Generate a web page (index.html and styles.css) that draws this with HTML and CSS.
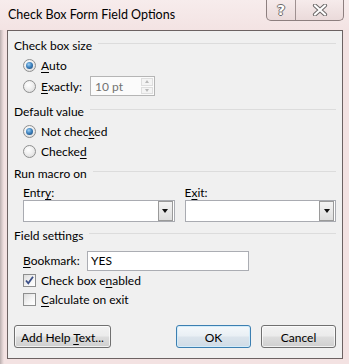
FILE: index.html
```html
<!doctype html>
<html lang="en">
<head>
<meta charset="utf-8">
<title>Check Box Form Field Options</title>
<meta name="viewport" content="width=device-width, initial-scale=1">
<link rel="stylesheet" href="styles.css">
</head>
<body>

<div class="dlg">
  <div class="titlebar">
    <span class="title">Check Box Form Field Options</span>
    <div class="caption">
      <span class="cap-btn help">?</span>
      <span class="cap-btn close">
        <svg width="18" height="12" viewBox="0 0 18 12">
          <path d="M4 1.5 L14 10.5 M14 1.5 L4 10.5" stroke="#6e6a6a" stroke-width="4.2" stroke-linecap="round"/>
          <path d="M4 1.5 L14 10.5 M14 1.5 L4 10.5" stroke="#fff" stroke-width="2.2" stroke-linecap="round"/>
        </svg>
      </span>
    </div>
  </div>

  <div class="client">
    <div class="group"><span>Check box size</span></div>
    <div class="row r-auto"><span class="radio on"></span><span><u>A</u>uto</span></div>
    <div class="row r-exact">
      <span class="radio"></span><span class="lbl-exact"><u>E</u>xactly:</span>
      <div class="spin">
        <span class="spin-val">10 pt</span>
        <span class="spin-btns"><i class="up"></i><i class="down"></i></span>
      </div>
    </div>

    <div class="group g2"><span>Default value</span></div>
    <div class="row r-nc"><span class="radio on"></span><span>Not chec<u>k</u>ed</span></div>
    <div class="row r-c"><span class="radio"></span><span>Checke<u>d</u></span></div>

    <div class="group g3"><span>Run macro on</span></div>
    <div class="macro">
      <div class="macro-col">
        <span class="mlabel">Entr<u>y</u>:</span>
        <div class="combo"><span class="drop"></span></div>
      </div>
      <div class="macro-col">
        <span class="mlabel">E<u>x</u>it:</span>
        <div class="combo"><span class="drop"></span></div>
      </div>
    </div>

    <div class="group g4"><span>Field settings</span></div>
    <div class="row r-bm">
      <span class="lbl-bm"><u>B</u>ookmark:</span>
      <div class="textbox">YES</div>
    </div>
    <div class="row r-cb1">
      <span class="check on">
        <svg width="11" height="11" viewBox="0 0 11 11"><path d="M2 5.5 L4.3 8.3 L9 1.8" fill="none" stroke="#3b4f87" stroke-width="1.8"/></svg>
      </span>
      <span>Check box e<u>n</u>abled</span>
    </div>
    <div class="row r-cb2"><span class="check"></span><span><u>C</u>alculate on exit</span></div>

    <div class="buttons">
      <button class="btn btn-help">Add Help <u>T</u>ext...</button>
      <button class="btn btn-ok">OK</button>
      <button class="btn">Cancel</button>
    </div>
  </div>
</div>

</body>
</html>
```

FILE: styles.css
```css
:root{--frame:#f3e2e2;--face:#f0f0f0;--edge:#8e8f8f;}
html,body{margin:0;padding:0;}
body{background:var(--frame);font-family:Lato,"Noto Sans",sans-serif;font-size:12px;color:#000;}
u{text-decoration:underline;text-underline-offset:2px;}

.dlg{width:349px;height:364px;background:linear-gradient(90deg,#b9aeae 0,#d9cbcb 2px,var(--frame) 4px,var(--frame) 100%);overflow:hidden;}

/* title bar */
.titlebar{height:30px;display:flex;align-items:flex-start;background:linear-gradient(180deg,#f7ecec 0,#f3e3e3 100%);}
.title{padding:6px 0 0 8px;line-height:18px;font-size:12.5px;}
.caption{margin-left:auto;margin-right:5px;display:flex;height:20px;border:1px solid #8d7f7f;border-top:0;border-radius:0 0 5px 5px;overflow:hidden;background:linear-gradient(180deg,#f6ebeb,#eadada);}
.cap-btn{display:flex;align-items:center;justify-content:center;}
.cap-btn.help{width:28px;border-right:1px solid #9e9090;font-weight:bold;font-size:14px;color:#fff;
  text-shadow:-1px 0 #6e6a6a,1px 0 #6e6a6a,0 -1px #6e6a6a,0 1px #6e6a6a;font-family:"DejaVu Sans",sans-serif;}
.cap-btn.close{width:47px;}

/* client area */
.client{margin-left:7px;width:328px;height:322px;border:1px solid #6c6262;background:var(--face);padding:5px 6px 0 0;display:flex;flex-direction:column;}

.group{display:flex;align-items:center;height:19px;padding-left:6px;gap:6px;}
.group::after{content:"";flex:1;height:0;border-top:1px solid #dcdcdc;margin-top:-4px;}
.g2{margin-top:5px;}
.g3{margin-top:3px;}
.g4{margin-top:4px;}

.row{display:flex;align-items:center;padding-left:15px;}
.r-auto,.r-exact,.r-nc{height:21px;}
.r-c{height:19px;}
.r-bm{height:19px;margin-top:6px;}
.r-cb1{height:20px;}
.r-cb2{height:19px;}

/* radio buttons */
.radio{width:11px;height:11px;border:1px solid var(--edge);border-radius:50%;margin-right:5px;flex:none;
  background:radial-gradient(circle at 40% 35%,#fff 0,#f1f1f1 40%,#d6d6d6 100%);display:flex;align-items:center;justify-content:center;}
.radio.on::after{content:"";width:7px;height:7px;border-radius:50%;
  background:radial-gradient(circle at 40% 35%,#9fd0f3 0,#3f84c0 45%,#163e6b 100%);}

/* spinner */
.lbl-exact{width:49px;}
.spin{width:63px;height:18px;border:1px solid #b5b5b5;background:#fbfbfb;display:flex;align-items:center;margin-top:-1px;}
.spin-val{flex:1;padding-left:4px;color:#727272;}
.spin-btns{width:12px;height:16px;display:flex;flex-direction:column;gap:1px;margin-right:1px;}
.spin-btns i{flex:1;border:1px solid #dedede;background:#f4f4f4;display:flex;align-items:center;justify-content:center;}
.spin-btns i::after{content:"";border-left:2.5px solid transparent;border-right:2.5px solid transparent;}
.spin-btns .up::after{border-bottom:3px solid #b9b9b9;}
.spin-btns .down::after{border-top:3px solid #b9b9b9;}

/* macro combos */
.macro{display:flex;gap:10px;padding-left:15px;}
.macro-col{flex:1;display:flex;flex-direction:column;}
.mlabel{height:15px;line-height:15px;margin:2px 0 0;}
.combo{height:20px;border:1px solid #a9abb1;background:#fff;display:flex;justify-content:flex-end;padding:0 1px 0 0;align-items:center;}
.drop{width:13px;height:18px;border:1px solid #9a9a9a;background:linear-gradient(180deg,#f3f3f3,#dedede);display:flex;align-items:center;justify-content:center;}
.drop::after{content:"";border-left:3.5px solid transparent;border-right:3.5px solid transparent;border-top:4px solid #111;}

/* field settings */
.lbl-bm{width:64px;}
.textbox{width:157px;height:18px;line-height:18px;border:1px solid #abadb3;background:#fff;padding-left:3px;}

.check{width:11px;height:11px;border:1px solid var(--edge);margin-right:5px;flex:none;
  background:linear-gradient(135deg,#dcdcdc 0,#f6f6f6 60%,#fff 100%);display:flex;align-items:center;justify-content:center;}
.check svg{display:block;}

/* buttons */
.buttons{display:flex;gap:10px;padding-left:6px;margin-top:16px;}
.btn{height:23px;width:75px;font:inherit;color:#000;border:1px solid #707070;border-radius:3px;padding:1px 0 0;
  background:linear-gradient(180deg,#f2f2f2 0,#ebebeb 48%,#dddddd 52%,#cfcfcf 100%);box-shadow:inset 0 0 0 1px rgba(255,255,255,.7);}
.btn-help{width:97px;margin-right:auto;}
.btn-ok{border-color:#3c7fb1;box-shadow:inset 0 0 0 1px #d3ecfa;
  background:linear-gradient(180deg,#f4f8fb 0,#e9eff4 48%,#dbe4ec 52%,#cfdbe6 100%);}
```
